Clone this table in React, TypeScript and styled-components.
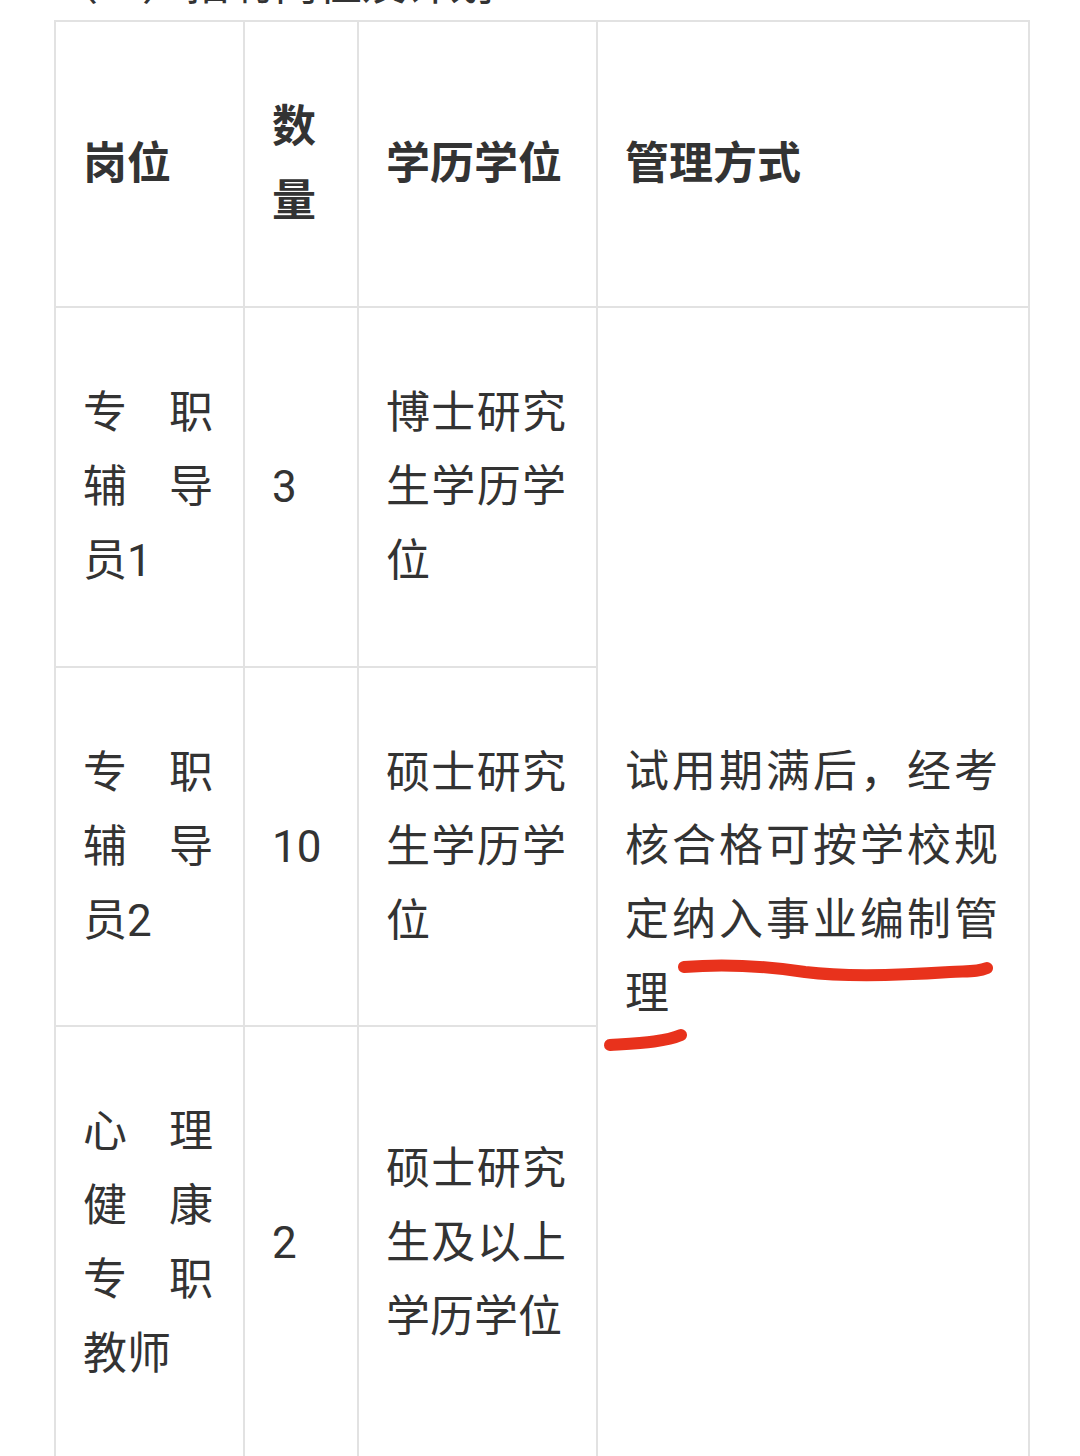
import styled, { createGlobalStyle } from 'styled-components';

const GlobalStyle = createGlobalStyle`
  html, body {
    margin: 0;
    padding: 0;
    background: #ffffff;
  }
  body {
    font-family: Roboto, 'Noto Sans CJK SC', sans-serif;
    color: #333333;
    overflow: hidden;
  }
`;

const rows = [
  { post: '专职辅导员1', count: '3', degree: '博士研究生学历学位', height: 360 },
  { post: '专职辅导员2', count: '10', degree: '硕士研究生学历学位', height: 359 },
  { post: '心理健康专职教师', count: '2', degree: '硕士研究生及以上学历学位', height: 433 },
];

export default function App() {
  return (
    <Page>
      <GlobalStyle />
      <Heading>（二）招聘岗位及计划</Heading>
      <Table>
        <colgroup>
          <col style={{ width: 189 }} />
          <col style={{ width: 114 }} />
          <col style={{ width: 239 }} />
          <col style={{ width: 432 }} />
        </colgroup>
        <tbody>
          <Row $height={286}>
            <HeadCell>岗位</HeadCell>
            <HeadCell>数量</HeadCell>
            <HeadCell>学历学位</HeadCell>
            <HeadCell>管理方式</HeadCell>
          </Row>
          {rows.map((r, i) => (
            <Row key={r.post} $height={r.height}>
              <Cell>{r.post}</Cell>
              <Cell>{r.count}</Cell>
              <Cell>{r.degree}</Cell>
              {i === 0 && (
                <Cell rowSpan={3}>试用期满后，经考核合格可按学校规定纳入事业编制管理</Cell>
              )}
            </Row>
          ))}
        </tbody>
      </Table>

      {/* 手写红线标注 */}
      <Marks viewBox="0 0 1080 1456" width={1080} height={1456}>
        <path
          d="M684 967 C 720 964, 765 966, 805 972 C 845 977, 905 975, 950 972 C 968 971, 978 972, 987 968"
          fill="none"
          stroke="#e8321c"
          strokeWidth={12}
          strokeLinecap="round"
        />
        <path
          d="M610 1045 C 640 1043, 665 1042, 681 1035"
          fill="none"
          stroke="#e8321c"
          strokeWidth={12}
          strokeLinecap="round"
        />
      </Marks>
    </Page>
  );
}

const Page = styled.div`
  position: relative;
  width: 1080px;
  height: 1456px;
  padding: 0 52px 0 54px;
  box-sizing: border-box;
  overflow: hidden;
`;

const Heading = styled.p`
  margin: -37px 0 13px 0;
  font-size: 44px;
  line-height: 44px;
  white-space: nowrap;
`;

const Table = styled.table`
  width: 974px;
  table-layout: fixed;
  border-collapse: collapse;
  font-size: 44px;
  line-height: 74px;
`;

const Row = styled.tr<{ $height: number }>`
  height: ${(p) => p.$height}px;
`;

const Cell = styled.td`
  border: 2px solid #e2e2e2;
  padding: 0 30px 0 27px;
  vertical-align: middle;
  text-align: justify;
  color: #333333;
  word-break: break-all;
`;

const HeadCell = styled(Cell)`
  font-weight: 700;
  text-align: left;
`;

const Marks = styled.svg`
  position: absolute;
  left: 0;
  top: 0;
  pointer-events: none;
`;
